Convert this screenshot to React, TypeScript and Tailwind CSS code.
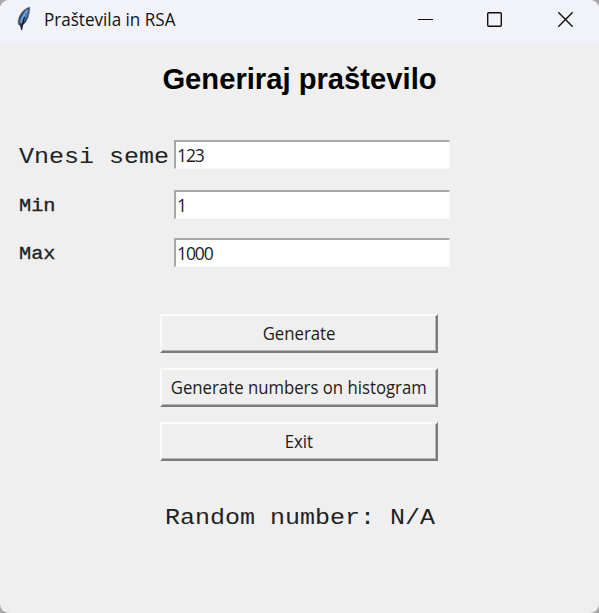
import React from 'react';

const ui = "font-['Open_Sans','Noto_Sans',sans-serif]";
const mono = "font-['Courier_New','Liberation_Mono',monospace]";

function Feather() {
  return (
    <svg className="ml-[16px] h-[26px] w-[16px] shrink-0" viewBox="0 0 16 26">
      <path d="M14 1C9 2 4 7 2.5 13C1.5 16 2 19 4 20L5.5 24L7 19C11 16 13.5 10 14 1Z" fill="#353b45" stroke="#8f9298" strokeWidth="0.7" />
      <path d="M12.8 2.5C8 5 4.2 10 3.4 17L6 17.5C10.5 14 12.5 8 12.8 2.5Z" fill="#3f7fc6" />
      <path d="M11.5 4C8.5 8 6 12 5 17" fill="none" stroke="#6fa8e4" strokeWidth="1.5" />
      <path d="M8.5 11C7 15 6 19 5.5 24" fill="none" stroke="#111" strokeWidth="1.2" />
    </svg>
  );
}

function TitleBar() {
  return (
    <header className="flex h-[43px] items-start bg-[#f1f3f9] pt-[6px]">
      <Feather />
      <h1 className={`${ui} ml-[12px] w-[336px] whitespace-nowrap text-[17.5px] leading-[27px] text-[#111]`}>
        <span className="inline-block origin-left scale-x-[0.975]">Praštevila in RSA</span>
      </h1>
      <svg className="h-[27px] w-[219px] shrink-0" viewBox="0 0 219 27" fill="none" stroke="#101010" strokeWidth="1.4">
        <path d="M38 13.5H53" strokeWidth="1" />
        <rect x="107.7" y="6.7" width="13.6" height="13.6" rx="1" />
        <path d="M178.3 6.3L192.7 20.7M192.7 6.3L178.3 20.7" />
      </svg>
    </header>
  );
}

function Field({ label, value, large = false }: { label: string; value: string; large?: boolean }) {
  return (
    <label className="flex h-[29px] items-center">
      <span className={`${mono} w-[155px] shrink-0 whitespace-pre text-[#222] ${large ? 'translate-y-[3px] scale-y-[0.87] text-[25px]' : 'translate-y-[2px] scale-y-[0.92] text-[20.3px] [-webkit-text-stroke:0.35px_#222]'}`}>{label}</span>
      <input
        defaultValue={value}
        className={`${ui} h-[29px] w-[276px] rounded-none border-b border-l-2 border-r border-t-2 border-b-[#f7f7f7] border-l-[#a7a7a7] border-r-[#f7f7f7] border-t-[#a7a7a7] bg-white pb-[1px] pl-[1px] text-[17.5px] tracking-[-1.1px] text-[#222] outline-none`}
      />
    </label>
  );
}

function Button({ children }: { children: string }) {
  return (
    <button className={`${ui} flex h-[39px] w-[278px] items-center justify-center border-b-2 border-l-2 border-r-2 border-t-2 border-b-[#7c7c7c] border-l-[#fafafa] border-r-[#7c7c7c] border-t-[#fafafa] bg-[#efefef] text-[17.5px] text-[#1b1b1b] shadow-[inset_-1px_-1px_0_#b5b5b5]`}>
      <span className="scale-x-[0.957] whitespace-nowrap">{children}</span>
    </button>
  );
}

export default function App() {
  return (
    <div className="h-[613px] w-[599px] bg-[#a9a9a9]">
      <main className="flex h-full flex-col overflow-hidden rounded-[9px] bg-[#efefef]">
        <TitleBar />
        <h2 className="mt-[17px] text-center font-['Liberation_Sans',sans-serif] text-[29.2px] font-bold leading-[38px] text-black">
          Generiraj praštevilo
        </h2>
        <section className="ml-[19px] mt-[42px] flex flex-col">
          <Field label="Vnesi seme" value="123" large />
          <div className="mt-[21px] flex flex-col gap-[19px]">
            <Field label="Min" value="1" />
            <Field label="Max" value="1000" />
          </div>
        </section>
        <section className="ml-[160px] mt-[47px] flex flex-col gap-[15px]">
          <Button>Generate</Button>
          <Button>Generate numbers on histogram</Button>
          <Button>Exit</Button>
        </section>
        <p className={`${mono} ml-[165px] mt-[43px] scale-y-[0.87] whitespace-nowrap text-[25px] leading-[30px] text-[#222]`}>Random number: N/A</p>
      </main>
    </div>
  );
}
